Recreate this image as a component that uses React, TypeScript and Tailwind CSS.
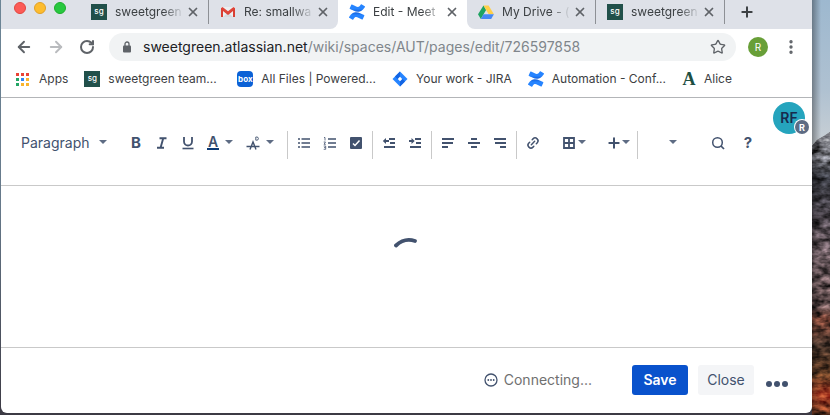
import type { ReactNode } from "react";
import { ArrowLeft, ArrowRight, Link2, MoreVertical, Plus, RotateCw, Star, X } from "lucide-react";
import { SiConfluence } from "react-icons/si";

type IconProps = { className?: string };

const SweetgreenIcon = () => (
  <span className="flex size-4 shrink-0 items-center justify-center bg-[#21504a] pb-0.5 text-[8px] leading-none font-medium text-white">
    sg
  </span>
);

const GmailIcon = () => (
  <svg viewBox="0 0 16 16" className="size-4 shrink-0">
    <path d="M1 3h14v10H1z" fill="#eceff1" />
    <path d="M3 13 8 8.500 13 13z" fill="#d6dade" />
    <path d="M1 13V3.500L8 9l7-5.500V13h-2V7L8 11 3 7v6z" fill="#d93f33" />
    <path d="M1 4.500 2.500 3 8 7.300 13.500 3 15 4.500 8 10z" fill="#e0463a" />
  </svg>
);

const ConfluenceIcon = () => (
  <svg viewBox="0 0 16 16" className="size-4 shrink-0">
    <defs>
      <linearGradient id="confluence" x1="0" y1="0" x2="0" y2="1">
        <stop offset="0" stopColor="#2684ff" />
        <stop offset="0.300" stopColor="#2684ff" />
        <stop offset="0.500" stopColor="#0c5bd8" />
        <stop offset="0.700" stopColor="#2684ff" />
        <stop offset="1" stopColor="#2684ff" />
      </linearGradient>
    </defs>
    <SiConfluence size={16} fill="url(#confluence)" stroke="#1f78f4" />
  </svg>
);

const DriveIcon = () => (
  <svg viewBox="0 0 16 16" className="size-4 shrink-0">
    <path d="M5.500 1.500 8.100 6 2.800 15 0 10.300z" fill="#1ea362" />
    <path d="M5.500 1.500h5.100l5.300 8.800h-5.200z" fill="#ffcf48" />
    <path d="M5.500 10.300h10.400L13.200 15H2.800z" fill="#4688f4" />
  </svg>
);

const JiraIcon = () => (
  <svg viewBox="0 0 16 16" className="size-4 shrink-0">
    <path d="M8 .5 15.500 8 8 15.500.5 8z" fill="#2684ff" />
    <path d="M8 .5v5L5.500 8 3 5.500z" fill="#1264e3" />
    <path d="M8 15.500v-5L10.500 8l2.500 2.500z" fill="#1264e3" />
    <path d="M8 5.800 10.200 8 8 10.200 5.800 8z" fill="#fff" />
  </svg>
);

const BoxIcon = () => (
  <span className="flex size-4 shrink-0 items-center justify-center rounded-sm bg-[#0b61d6] text-[8px] leading-none font-bold text-white">
    box
  </span>
);

const AliceIcon = () => (
  <span className="flex h-4 w-3.5 shrink-0 items-center justify-center font-['Liberation_Serif',serif] text-lg leading-none font-bold text-[#1d4f43]">
    A
  </span>
);

const appColors = [
  "fill-[#ea4335]",
  "fill-[#ea4335]",
  "fill-[#ea4335]",
  "fill-[#23a565]",
  "fill-[#2f86f5]",
  "fill-[#f9b42d]",
  "fill-[#23a565]",
  "fill-[#f9b42d]",
  "fill-[#f9b42d]",
];

const AppsIcon = () => (
  <svg viewBox="0 0 13 13" className="mr-0.5 size-[13px] shrink-0">
    {appColors.map((color, i) => (
      <rect
        key={i}
        x={(i % 3) * 5}
        y={Math.floor(i / 3) * 5}
        width="3"
        height="3"
        className={color}
      />
    ))}
  </svg>
);

const Caret = ({ className = "" }: IconProps) => (
  <svg viewBox="0 0 8 4" className={`h-1 w-2 shrink-0 fill-[#5e6c84] ${className}`}>
    <path d="M0 0h8L4 4z" />
  </svg>
);

const Glyph = ({ children }: { children: ReactNode }) => (
  <svg viewBox="0 0 14 14" className="size-3.5 shrink-0" fill="none" stroke="#42526e" strokeWidth="2">
    {children}
  </svg>
);

const BulletIcon = () => (
  <Glyph>
    <path d="M1 3h2M1 7h2M1 11h2M4.500 3h8.500M4.500 7h8.500M4.500 11h8.500" strokeWidth="1.600" />
  </Glyph>
);

const NumberIcon = () => (
  <Glyph>
    <path d="M5 3h8M5 7h8M5 11h8" strokeWidth="1.600" />
    <path d="M1 1.500h1v3M.7 6h1.800L1 8.300h1.800M.7 10h2v3.300h-2M1 11.600h1.500" strokeWidth="0.800" />
  </Glyph>
);

const CheckIcon = () => (
  <Glyph>
    <rect x="1" y="1" width="12" height="12" rx="1" fill="#42526e" stroke="none" />
    <path d="m4 7.500 2 2L10.500 4.500" stroke="#fff" strokeWidth="1.500" />
  </Glyph>
);

const OutdentIcon = () => (
  <Glyph>
    <path d="M7 3h6M8 7h5M2 11h11M3 5h4" strokeWidth="1.800" />
    <path d="M4 2 .8 5 4 8z" fill="#42526e" stroke="none" />
  </Glyph>
);

const IndentIcon = () => (
  <Glyph>
    <path d="M7 3h6M8 7h5M2 11h11M1 5h3" strokeWidth="1.800" />
    <path d="M3.500 2 6.700 5 3.500 8z" fill="#42526e" stroke="none" />
  </Glyph>
);

const AlignLeftIcon = () => (
  <Glyph>
    <path d="M1 3h12M1 7h11M1 11h6" strokeWidth="1.800" />
  </Glyph>
);

const AlignCenterIcon = () => (
  <Glyph>
    <path d="M4 3h6M1 7h12M4 11h6" strokeWidth="1.800" />
  </Glyph>
);

const AlignRightIcon = () => (
  <Glyph>
    <path d="M1 3h12M2 7h11M7 11h6" strokeWidth="1.800" />
  </Glyph>
);

const TableIcon = () => (
  <Glyph>
    <path d="M2 2h10v10H2zM7 2v10M2 7h10" strokeWidth="1.800" />
  </Glyph>
);

const ItalicIcon = () => (
  <Glyph>
    <path d="M4.500 2.200H11.500M2 11.800H9M8.300 2 5.500 12" strokeWidth="1.900" />
  </Glyph>
);

const UnderlineIcon = () => (
  <Glyph>
    <path d="M3 1v4.500a4 4 0 0 0 8 0V1" strokeWidth="1.800" />
    <path d="M1.500 12.500h11" strokeWidth="1.600" />
  </Glyph>
);

const ClearIcon = () => (
  <Glyph>
    <path d="M4 13.500 7 6l3 7.500M.5 10.500h13" strokeWidth="1.400" />
    <path d="M9.800 1h1a1.500 1.500 0 0 1 0 3.200h-1z" strokeWidth="0.900" />
  </Glyph>
);

const SearchIcon = () => (
  <Glyph>
    <circle cx="6.500" cy="6.500" r="4.800" strokeWidth="1.500" />
    <path d="m10 10 3 3" strokeWidth="1.700" />
  </Glyph>
);

const ToolButton = ({
  label,
  menu,
  className = "w-[26px]",
  children,
}: {
  label: string;
  menu?: boolean;
  className?: string;
  children?: ReactNode;
}) => (
  <button
    type="button"
    aria-label={label}
    className={`flex h-7 shrink-0 items-center justify-center text-[#42526e] ${className}`}
  >
    {children}
    {menu && <Caret className="mb-0.5" />}
  </button>
);

const Divider = () => <span className="mx-[3px] mt-0.5 h-7 w-px shrink-0 bg-[#c9c9c9]" />;

const Tab = ({
  icon,
  title,
  active,
  divided,
}: {
  icon: ReactNode;
  title: string;
  active?: boolean;
  divided?: boolean;
}) => (
  <div
    className={`flex h-6 w-[129px] min-w-0 items-center pr-2 pl-[11px] ${
      divided ? "border-r border-[#8d9095]" : ""
    }`}
  >
    {icon}
    <a
      href="#"
      aria-current={active ? "page" : undefined}
      className="ml-2 min-w-0 flex-1 text-xs leading-4 whitespace-nowrap text-[#3c4043] [mask-image:linear-gradient(to_right,black_70%,transparent)]"
    >
      {title}
    </a>
    <button type="button" aria-label={`Close ${title}`} className="ml-0.5">
      <X className="size-3.5 text-[#5f6368]" strokeWidth={3} />
    </button>
  </div>
);

const bookmarks = [
  { icon: <AppsIcon />, title: "Apps" },
  { icon: <SweetgreenIcon />, title: "sweetgreen team...", wide: true },
  { icon: <BoxIcon />, title: "All Files | Powered...", wide: true },
  { icon: <JiraIcon />, title: "Your work - JIRA" },
  { icon: <ConfluenceIcon />, title: "Automation - Conf...", wide: true },
  { icon: <AliceIcon />, title: "Alice" },
];

const Wallpaper = () => (
  <svg
    aria-hidden="true"
    viewBox="0 0 18 415"
    preserveAspectRatio="none"
    className="absolute inset-y-0 right-0 h-full w-[18px]"
  >
    <defs>
      <linearGradient id="sky" x2="0" y2="1">
        <stop offset="0" stopColor="#9db8cf" />
        <stop offset="0.600" stopColor="#afc1d1" />
        <stop offset="1" stopColor="#ccd1d5" />
      </linearGradient>
      <linearGradient id="land" x2="0" y2="1">
        <stop offset="0" stopColor="#85868d" />
        <stop offset="0.100" stopColor="#6c6d74" />
        <stop offset="0.160" stopColor="#3a3c44" />
        <stop offset="0.300" stopColor="#49434a" />
        <stop offset="0.420" stopColor="#6c5c62" />
        <stop offset="0.620" stopColor="#655050" />
        <stop offset="0.660" stopColor="#864b3b" />
        <stop offset="0.750" stopColor="#49362d" />
        <stop offset="0.860" stopColor="#6e4327" />
        <stop offset="0.930" stopColor="#b9492b" />
        <stop offset="1" stopColor="#6b3b24" />
      </linearGradient>
      <linearGradient id="shade">
        <stop offset="0" stopColor="#000" stopOpacity="0.350" />
        <stop offset="1" stopColor="#000" stopOpacity="0" />
      </linearGradient>
      <filter id="rock" x="0" y="0" width="1" height="1" colorInterpolationFilters="sRGB">
        <feTurbulence type="fractalNoise" baseFrequency="0.100 0.180" numOctaves="3" seed="8" />
        <feColorMatrix values="1.200 0 0 0 -.14 1.200 0 0 0 -.14 1.200 0 0 0 -.14 0 0 0 0 1" />
        <feComposite in2="SourceGraphic" operator="in" result="noise" />
        <feBlend in="noise" in2="SourceGraphic" mode="overlay" />
      </filter>
    </defs>
    <path d="M0 0h18v150H0z" fill="url(#sky)" />
    <path d="M0 146 5 140 12 136 18 132V415H0z" fill="url(#land)" filter="url(#rock)" />
    <path d="M0 0h9v415H0z" fill="url(#shade)" />
  </svg>
);

const BrowserTabs = () => (
  <div className="flex h-[29px] bg-white">
    <div className="flex min-w-0 rounded-br-lg bg-[#dee1e8]">
      <div className="flex w-[79px] shrink-0 gap-2 pt-0.5 pl-[13px]">
        <button type="button" aria-label="Close window" className="size-3 rounded-full border border-[#e2463f] bg-[#fc5b57]" />
        <button type="button" aria-label="Minimize window" className="size-3 rounded-full border border-[#e0a028] bg-[#fdbc2e]" />
        <button type="button" aria-label="Zoom window" className="size-3 rounded-full border border-[#1dad2b] bg-[#28c83f]" />
      </div>
      <Tab icon={<SweetgreenIcon />} title="sweetgreen" divided />
      <Tab icon={<GmailIcon />} title="Re: smallwa" />
    </div>
    <Tab icon={<ConfluenceIcon />} title="Edit - Meet" active />
    <div className="flex min-w-0 flex-1 rounded-bl-lg bg-[#dee1e8]">
      <Tab icon={<DriveIcon />} title="My Drive - (" divided />
      <Tab icon={<SweetgreenIcon />} title="sweetgreen" divided />
      <button type="button" aria-label="New tab" className="ml-3.5 flex h-6 items-center">
        <Plus className="size-4 text-[#3c4043]" strokeWidth={3} />
      </button>
    </div>
  </div>
);

const AddressBar = () => (
  <div className="flex h-9 items-center pr-3 pl-3.5">
    <button type="button" aria-label="Back">
      <ArrowLeft className="size-[18px] text-[#5f6368]" strokeWidth={2.5} />
    </button>
    <button type="button" aria-label="Forward" className="ml-3.5">
      <ArrowRight className="size-[18px] text-[#b9bbbe]" strokeWidth={2.5} />
    </button>
    <button type="button" aria-label="Reload" className="ml-3.5">
      <RotateCw className="size-4 text-[#5f6368]" strokeWidth={3} />
    </button>
    <div className="ml-3.5 flex h-7 min-w-0 flex-1 items-center rounded-full bg-[#f1f3f4] pr-2.5 pl-3.5">
      <svg viewBox="0 0 8 12" className="h-3 w-2 shrink-0">
        <path d="M2 5V3a2 2 0 0 1 4 0v2" fill="none" stroke="#5f6368" strokeWidth="1.300" />
        <rect y="4.500" width="8" height="7" rx="1" fill="#5f6368" />
      </svg>
      <a href="#" className="ml-3 min-w-0 flex-1 truncate text-sm leading-5 text-[#80868b]">
        <span className="text-[#202124]">sweetgreen.atlassian.net</span>
        /wiki/spaces/AUT/pages/edit/726597858
      </a>
      <button type="button" aria-label="Bookmark this page">
        <Star className="size-4 text-[#5f6368]" />
      </button>
    </div>
    <button
      type="button"
      aria-label="Profile"
      className="ml-3 flex size-5 items-center justify-center rounded-full bg-[#689f38] text-[10px] leading-none text-white"
    >
      R
    </button>
    <button type="button" aria-label="Menu" className="ml-3.5">
      <MoreVertical className="size-[18px] text-[#5f6368]" strokeWidth={2.5} />
    </button>
  </div>
);

const Toolbar = () => (
  <div className="flex h-[88px] items-start border-b border-[#c9c9c9] pt-1 pl-5">
    <div className="mt-[27px] flex min-w-0 flex-1 items-start">
      <div className="relative h-7 w-[102px] shrink-0">
        <select
          aria-label="Text style"
          className="h-7 w-full appearance-none bg-transparent text-sm leading-5 text-[#42526e]"
        >
          <option>Paragraph</option>
        </select>
        <Caret className="pointer-events-none absolute top-[11px] right-4" />
      </div>
      <ToolButton label="Bold">
        <span className="text-[15px] leading-5 font-bold">B</span>
      </ToolButton>
      <ToolButton label="Italic">
        <ItalicIcon />
      </ToolButton>
      <ToolButton label="Underline">
        <UnderlineIcon />
      </ToolButton>
      <ToolButton label="Text colour" menu className="w-[38px] gap-1.5">
        <span className="w-3 border-b-2 border-[#0c3a75] text-sm leading-3 font-semibold">A</span>
      </ToolButton>
      <ToolButton label="More formatting" menu className="w-[45px] gap-1.5 pr-1">
        <ClearIcon />
      </ToolButton>
      <Divider />
      <ToolButton label="Bullet list">
        <BulletIcon />
      </ToolButton>
      <ToolButton label="Numbered list">
        <NumberIcon />
      </ToolButton>
      <ToolButton label="Task list">
        <CheckIcon />
      </ToolButton>
      <Divider />
      <ToolButton label="Outdent">
        <OutdentIcon />
      </ToolButton>
      <ToolButton label="Indent">
        <IndentIcon />
      </ToolButton>
      <Divider />
      <ToolButton label="Align left">
        <AlignLeftIcon />
      </ToolButton>
      <ToolButton label="Align center">
        <AlignCenterIcon />
      </ToolButton>
      <ToolButton label="Align right">
        <AlignRightIcon />
      </ToolButton>
      <Divider />
      <ToolButton label="Link">
        <Link2 className="size-3.5 -rotate-45" strokeWidth={2.5} />
      </ToolButton>
      <ToolButton label="Table" menu className="ml-3 w-8 gap-0.5">
        <TableIcon />
      </ToolButton>
      <ToolButton label="Insert" menu className="ml-3 w-8">
        <Plus className="size-4" strokeWidth={3} />
      </ToolButton>
      <Divider />
      <ToolButton label="More" menu className="ml-7" />
      <div className="ml-auto flex">
        <ToolButton label="Find">
          <SearchIcon />
        </ToolButton>
        <ToolButton label="Help" className="ml-1 w-[26px]">
          <span className="text-[15px] leading-5 font-bold">?</span>
        </ToolButton>
      </div>
    </div>
    <button
      type="button"
      aria-label="RF"
      className="relative mr-[7px] ml-3 flex size-8 shrink-0 items-center justify-center rounded-full bg-[#25a4bd] text-sm leading-none font-semibold text-[#172b4d]"
    >
      RF
      <span className="absolute -right-1 bottom-0 flex size-3.5 items-center justify-center rounded-full bg-[#5e6c84] text-[9px] leading-none font-bold text-white ring-1 ring-white">
        R
      </span>
    </button>
  </div>
);

const Footer = () => (
  <footer className="flex h-[66px] items-center justify-end border-t border-[#c9c9c9] pr-6 pb-0.5">
    <svg viewBox="0 0 14 14" className="size-3.5" fill="#42526e">
      <circle cx="7" cy="7" r="6" fill="none" stroke="#42526e" strokeWidth="1.300" />
      <circle cx="4.300" cy="7" r=".9" />
      <circle cx="7" cy="7" r=".9" />
      <circle cx="9.700" cy="7" r=".9" />
    </svg>
    <span className="mr-10 ml-1.5 text-sm leading-5 text-[#707070]">Connecting...</span>
    <button type="button" className="h-[30px] w-14 rounded-[3px] bg-[#0952cc] text-sm font-semibold text-white">
      Save
    </button>
    <button type="button" className="ml-2.5 h-[30px] w-14 rounded-[3px] bg-[#f4f5f7] text-sm text-[#42526e]">
      Close
    </button>
    <button type="button" aria-label="More actions" className="mt-2 ml-3 flex gap-0.5">
      <span className="size-1.5 rounded-full bg-[#42526e]" />
      <span className="size-1.5 rounded-full bg-[#42526e]" />
      <span className="size-1.5 rounded-full bg-[#42526e]" />
    </button>
  </footer>
);

const App = () => {
  return (
    <div className="relative flex min-h-screen bg-[#3c3a44] bg-linear-to-b from-[#6c8596] via-[#66798a] to-[#3c3a44] pr-[18px] pb-0.5 pl-px font-['Inter','Liberation_Sans',sans-serif]">
      <Wallpaper />
      <div className="relative flex min-w-0 flex-1 flex-col overflow-hidden rounded-b-md bg-white">
        <BrowserTabs />
        <AddressBar />
        {/* Bookmarks */}
        <nav className="flex h-[33px] items-center gap-4 border-b border-[#b3b5b8] pr-4 pb-1 pl-[15px]">
          {bookmarks.map(({ icon, title, wide }) => (
            <a
              key={title}
              href="#"
              className="flex items-center gap-2 text-xs leading-4 whitespace-nowrap text-[#3c4043]"
            >
              {icon}
              <span className={wide ? "min-w-[113px]" : ""}>{title}</span>
            </a>
          ))}
        </nav>
        <Toolbar />
        {/* Editor content */}
        <main className="flex flex-1 justify-center pt-[50px]">
          <svg viewBox="0 0 26 14" role="img" aria-label="Loading" className="h-3.5 w-[26px]">
            <path d="M2 9.500Q10.500 1.500 21 5" fill="none" stroke="#42526e" strokeWidth="3.800" strokeLinecap="round" />
          </svg>
        </main>
        <Footer />
      </div>
    </div>
  );
};

export default App;
